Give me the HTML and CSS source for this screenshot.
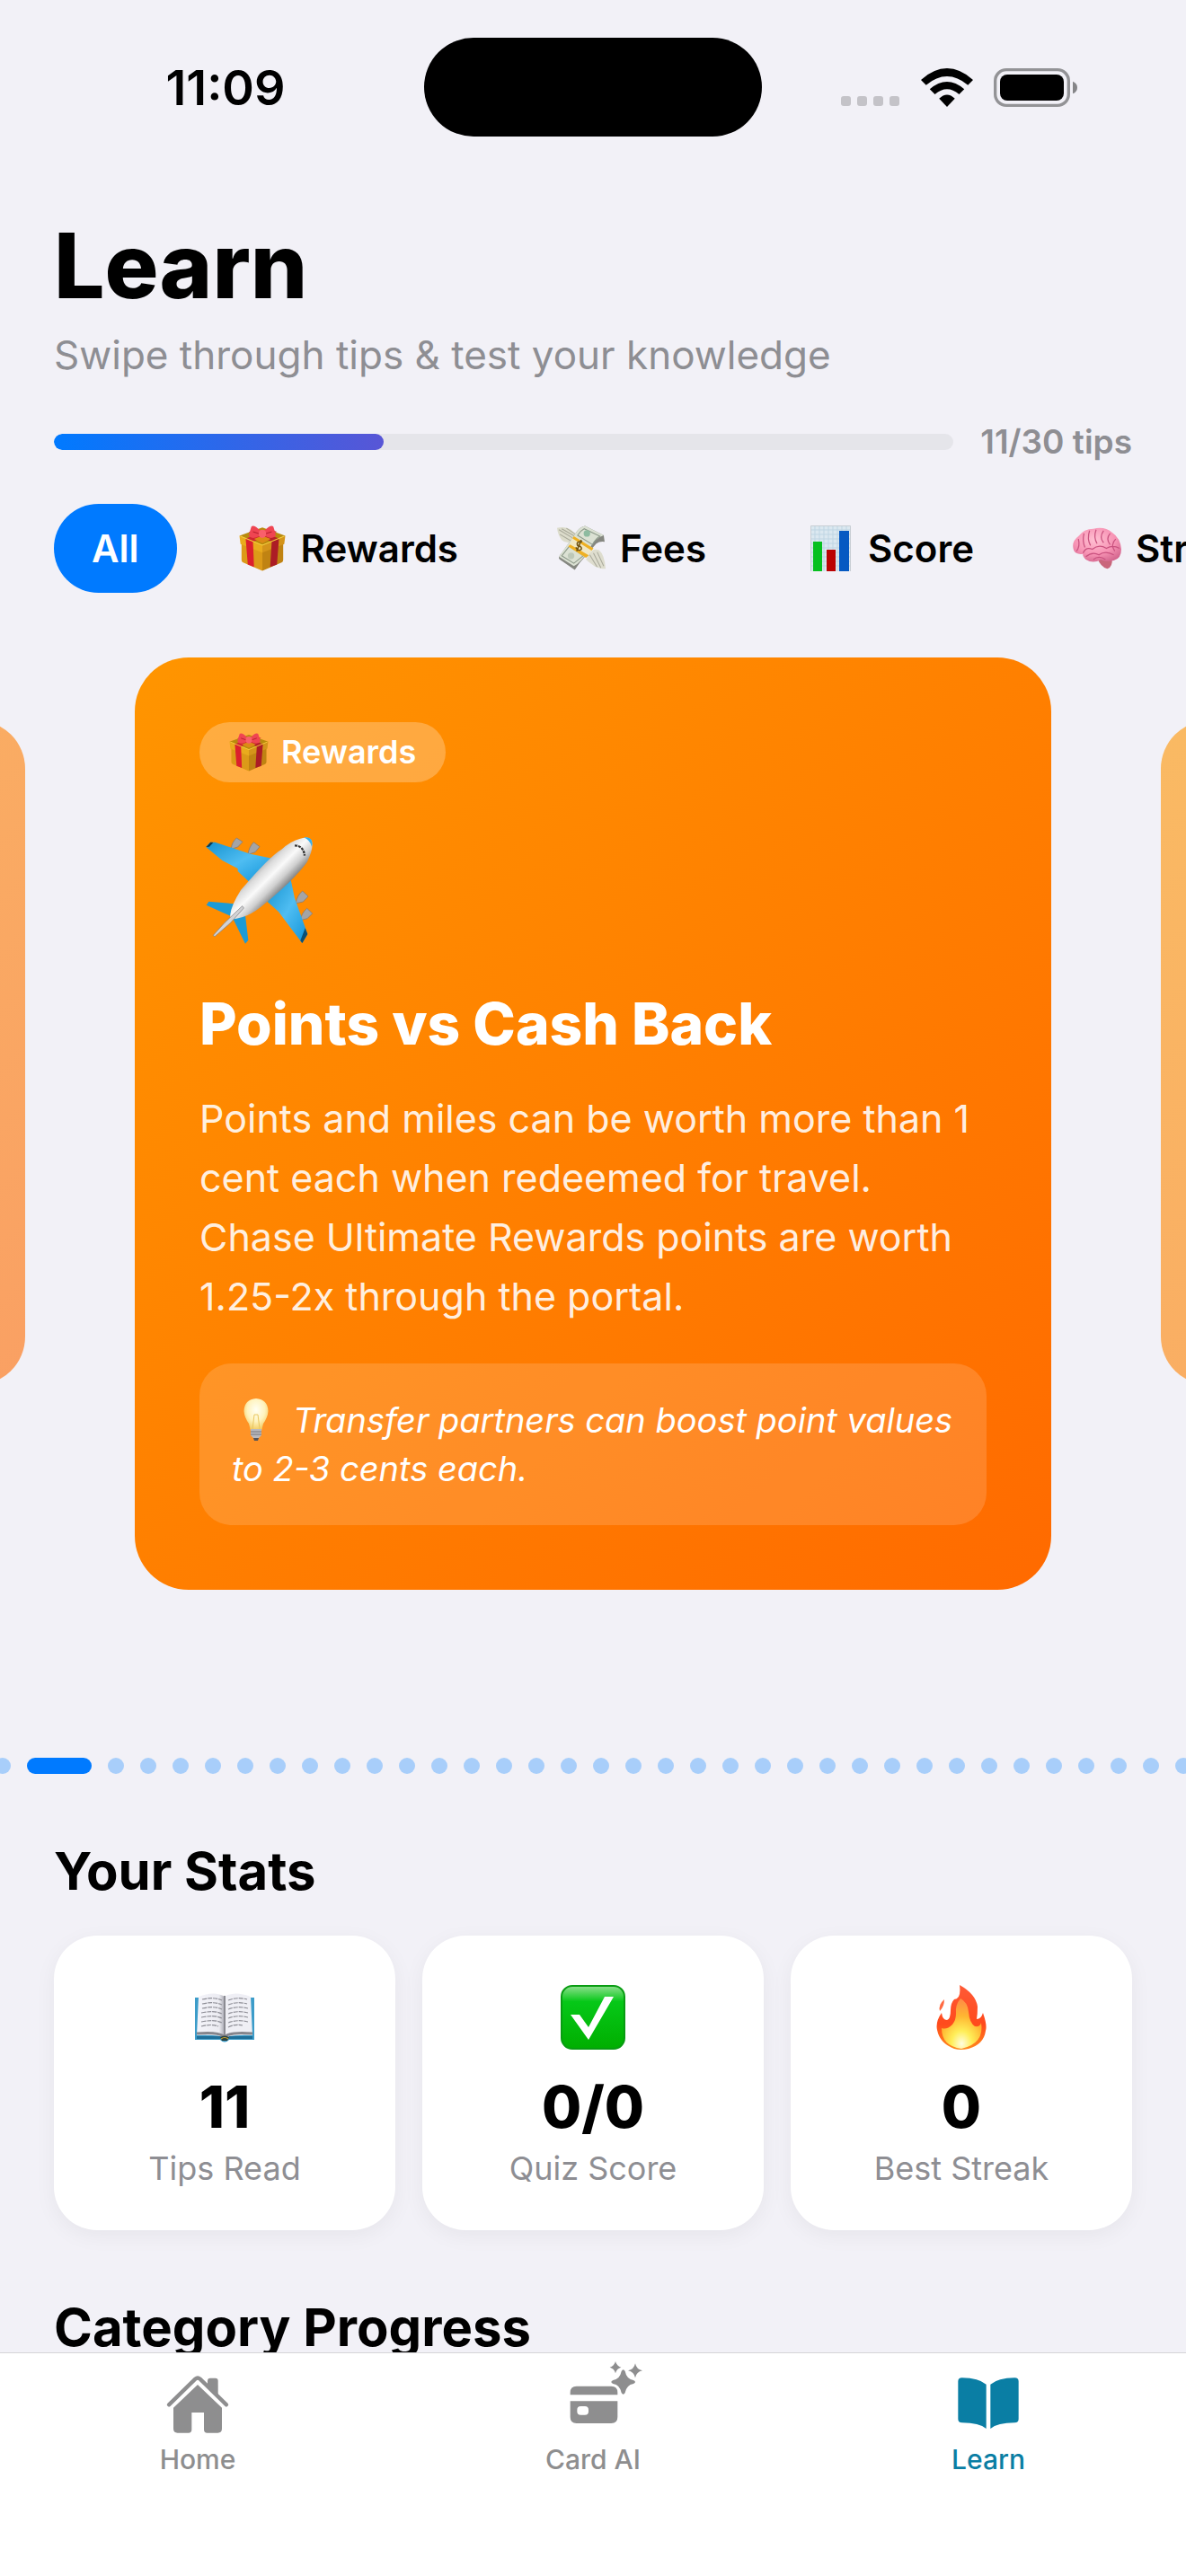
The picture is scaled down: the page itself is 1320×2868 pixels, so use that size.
FILE: index.html
```html
<!DOCTYPE html>
<html lang="en">
<head>
<meta charset="utf-8">
<meta name="viewport" content="width=device-width, initial-scale=1">
<title>Learn</title>
<link rel="stylesheet" href="styles.css">
</head>
<body>

<!-- Shared drawings -->
<svg class="defs" aria-hidden="true">
  <defs>
    <linearGradient id="wing" x1="0" y1="0" x2="1" y2="1">
      <stop offset="0" stop-color="#1592cf"/>
      <stop offset="0.5" stop-color="#4fbdf2"/>
      <stop offset="1" stop-color="#0f93d8"/>
    </linearGradient>
    <linearGradient id="fuselage" gradientUnits="userSpaceOnUse" x1="260" y1="545" x2="345" y2="630">
      <stop offset="0" stop-color="#9c9c9c"/>
      <stop offset="0.25" stop-color="#dcdcdc"/>
      <stop offset="0.5" stop-color="#fafafa"/>
      <stop offset="0.75" stop-color="#d0d0d0"/>
      <stop offset="1" stop-color="#808080"/>
    </linearGradient>
    <radialGradient id="bulb" cx="0.5" cy="0.35" r="0.6">
      <stop offset="0" stop-color="#fffff4"/>
      <stop offset="0.6" stop-color="#fff3bd"/>
      <stop offset="1" stop-color="#f4cf6a"/>
    </radialGradient>
    <linearGradient id="check" x1="0" y1="0" x2="0" y2="1">
      <stop offset="0" stop-color="#8fe08f"/>
      <stop offset="0.25" stop-color="#06c818"/>
      <stop offset="1" stop-color="#00ae00"/>
    </linearGradient>
    <linearGradient id="flame" x1="0" y1="0" x2="0" y2="1">
      <stop offset="0" stop-color="#ff5a36"/>
      <stop offset="0.6" stop-color="#ff4a1c"/>
      <stop offset="1" stop-color="#ff8a1c"/>
    </linearGradient>
    <radialGradient id="flameCore" cx="0.5" cy="0.9" r="0.85">
      <stop offset="0" stop-color="#fffde0"/>
      <stop offset="0.3" stop-color="#ffee58"/>
      <stop offset="0.65" stop-color="#ffb631"/>
      <stop offset="1" stop-color="#ff8f43"/>
    </radialGradient>
    <linearGradient id="page" x1="0" y1="0" x2="1" y2="0">
      <stop offset="0" stop-color="#f4f4fa"/>
      <stop offset="0.8" stop-color="#ececf2"/>
      <stop offset="1" stop-color="#a9a9b2"/>
    </linearGradient>
    <radialGradient id="brain" cx="0.45" cy="0.35" r="0.7">
      <stop offset="0" stop-color="#ffc0d2"/>
      <stop offset="0.6" stop-color="#f793b4"/>
      <stop offset="1" stop-color="#d4678f"/>
    </radialGradient>

    <symbol id="gift" viewBox="0 0 44 44">
      <path d="M2 15 L22 23 V43.500 L3.500 35.500 Q2 35 2 33Z" fill="#dc9a18"/>
      <path d="M42 15 L22 23 V43.500 L40.500 35.500 Q42 35 42 33Z" fill="#c08312"/>
      <path d="M0 10 L22 2 L44 10 L22 19Z" fill="#b98a0c"/>
      <path d="M0 10 L22 19 V26 L1 18Z" fill="#e9ab1d"/>
      <path d="M44 10 L22 19 V26 L43 18Z" fill="#d4941a"/>
      <path d="M6 12.500 L13 15.500 L14 40 L8 37.500Z" fill="#dc1f2d"/>
      <path d="M38 12.500 L31 15.500 L29.500 40 L36 37.500Z" fill="#ac1c25"/>
      <path d="M6 12.500 L30 4 L36 6 L13 15.500Z" fill="#cf2430"/>
      <path d="M38 12.500 L14 4 L9 6.500 L31 15.500Z" fill="#b81f29"/>
      <path d="M14 13 L22 10 L30 13 L22 17Z" fill="#dd8a16"/>
      <path d="M1 10.300 L22 19 L43 10.300" stroke="#f4cb3c" stroke-width="0.900" fill="none"/>
      <path d="M20 5 Q14 -1 11.500 1 Q10 5 9 10 Q12 14 20 10Z" fill="#ef4552"/>
      <path d="M24 5 Q30 -1 32.500 1 Q34 5 35 10 Q31 14 24 10Z" fill="#ef4552"/>
      <path d="M13 6 L19 8 M31 6 L25 8" stroke="#b82230" stroke-width="1"/>
      <rect x="18.500" y="4" width="7" height="8" rx="3.500" fill="#f9606a"/>
    </symbol>

    <symbol id="cash" viewBox="0 0 52 48">
      <path d="M19 16 Q10 20 5 15 Q1 10 0 2 Q9 0 15 4 Q20 8 22 13Z" fill="#dcdccb"/>
      <path d="M2 4 L17 13 M5 3 L19 11 M3 9 L15 16 M10 2.500 L20 9" stroke="#a9a99a" stroke-width="1"/>
      <path d="M34 30 Q39 23 45 26 Q51 31 52 46 Q45 46 40 43 Q34 39 31 36Z" fill="#deddce"/>
      <path d="M35 31 L43 44 M39 29 L47 45 M43 28 L50 43" stroke="#aaaa9c" stroke-width="1"/>
      <path d="M30 0 Q24 1 19 9 L5 29 Q0 34 3 36 L19 47 L24 40 L42 19 Q46 16 51 17 L50 10Z" fill="#858780"/>
      <path d="M30 0 Q24 1 19 9 L2 33 L18 43 Q25 40 34 26 Q40 13 50 10Z" fill="#dbe1d3"/>
      <path d="M29 3 Q25 5 22 10 L38 20 Q41 14 46 11Z M13 22 L5 32 L18 40 L28 32Z" fill="none" stroke="#8c9989" stroke-width="1"/>
      <circle cx="32" cy="8" r="3.500" fill="#8dbba0"/>
      <circle cx="15" cy="32" r="3.500" fill="#bdc8b8"/>
      <path d="M18 11 L39 24 L31 34 L12 22Z" fill="#f0e7c4"/>
      <path d="M18 11 L39 24 L37 26.500 L16.500 13.500Z M14 20 L34 31.500 L31 34 L12 22Z" fill="#eeb023"/>
      <path d="M27 17 Q20 16 22 21 Q27 22 26 25 Q23 28 20 23 M26 15 L21 27" fill="none" stroke="#705311" stroke-width="1.500"/>
    </symbol>

    <symbol id="chart" viewBox="-6 0 54 51">
      <rect width="45" height="51" fill="#dbe8f0"/>
      <path d="M0 5H45M0 10H45M0 15H45M0 20H45M0 25H45M0 30H45M0 35H45M0 40H45M0 45H45M5 0V51M10 0V51M15 0V51M20 0V51M25 0V51M30 0V51M35 0V51M40 0V51" stroke="#bfd5e3" stroke-width="1"/>
      <path d="M0.500 51 V0.500 H44.500 V51" fill="none" stroke="#c8ced4"/>
      <rect x="3" y="18" width="10" height="33" fill="#06c01f"/>
      <rect x="18" y="27" width="10" height="24" fill="#bb0203"/>
      <rect x="32" y="6" width="11" height="45" fill="#0559c2"/>
    </symbol>

    <symbol id="brainIcon" viewBox="0 0 52 44">
      <path d="M26 32 Q30 42 37 44 Q43 42 42 32Z" fill="#c9667b"/>
      <path d="M1 24 Q-2 15 6 9 Q12 1 22 1 Q34 -2 42 5 Q51 11 52 23 Q52 33 44 35 Q37 37 30 34 Q22 39 14 34 Q10 30 11 28 Q3 29 1 24Z" fill="url(#brain)"/>
      <path d="M6 12 Q8 20 4 25 M12 6 Q10 14 13 21 M18 3 Q15 12 19 19 M25 2 Q22 10 26 17 M33 3 Q28 10 33 16 M40 6 Q35 12 40 18 M46 12 Q40 18 45 25 M11 27 Q14 20 21 23 Q28 17 36 22 Q43 18 50 22 M14 31 Q21 25 28 29 Q35 24 44 29 M22 34 Q28 29 35 34" fill="none" stroke="#c9527f" stroke-width="1.200"/>
    </symbol>

    <symbol id="plane" viewBox="66 435 396 396">
      <g fill="#a4a4a6" stroke="#77777a" stroke-width="2">
        <path d="M190 459 L210 472 L194 489 L172 496 Q173 474 190 459Z"/>
        <path d="M247 473 L267 488 L252 506 L228 514 Q231 489 247 473Z"/>
        <path d="M410 636 L429 654 L412 672 L388 677 Q391 652 410 636Z"/>
        <path d="M425 694 L443 711 L426 728 L403 734 Q406 710 425 694Z"/>
      </g>
      <path d="M88 489 L103 473 L118 473 L236 512 L312 528 L300 570 L230 604 L194 570 L194 561 L142 534Z" fill="url(#wing)"/>
      <path d="M88 489 L103 473 L112 474 L99 488Z" fill="#0b3a52"/>
      <path d="M370 594 L384 660 L427 780 L409 810 L368 756 L330 705 L293 672 Z" fill="url(#wing)"/>
      <path d="M427 780 L409 810 L403 802 L419 760Z" fill="#0b4f74"/>
      <path d="M89 683 L97 671 L184 679 L178 722 L166 718Z M178 728 L219 718 L229 800 L219 812Z" fill="#1c9bd6"/>
      <path d="M400 462 Q430 450 441 468 Q448 495 425 540 Q380 602 270 690 Q225 727 170 731 Q162 700 204 633 Q300 520 340 497 Q370 470 400 462Z" fill="url(#fuselage)"/>
      <path d="M415 457 Q433 454 440 466 Q445 476 441 488 Q436 467 415 457Z" fill="#35b0ee"/>
      <path d="M384 484 Q414 485 417 518" fill="none" stroke="#333" stroke-width="7" stroke-dasharray="9 3"/>
      <path d="M209 686 L214 693 L170 742 L117 788 L112 784 L150 742Z" fill="#d2d2d4" stroke="#77777a" stroke-width="2"/>
    </symbol>

    <symbol id="bulbIcon" viewBox="0 0 30 48">
      <path d="M15 0 Q28 1 28.500 14 Q28 21 23 28 L21 36 H9 L7 28 Q2 21 1.500 14 Q2 1 15 0Z" fill="url(#bulb)"/>
      <path d="M11 34 L13 18 L17 18 L19 34" fill="none" stroke="#e9c862" stroke-width="1"/>
      <path d="M9 34 H21 V41 L18 44 H12 L9 41Z" fill="#b9b9bd"/>
      <path d="M9 37 H21 M9 40 H21" stroke="#77777c" stroke-width="1"/>
      <path d="M12 44 H18 L17 47 H13Z" fill="#55555a"/>
    </symbol>

    <symbol id="bookEmoji" viewBox="0 0 72 72">
      <path d="M3 14 H69 V61 H41 Q36 66 31 61 H3Z" fill="#3c9cc9"/>
      <path d="M5 57 H32 Q36 60 40 57 H67 V60 H40 Q36 64 32 60 H5Z" fill="#1f6f99"/>
      <path d="M7 13 Q25 6 36 13 V59 Q30 55 5 56Z" fill="url(#page)"/>
      <path d="M65 13 Q47 6 36 13 V59 Q42 55 67 56Z" fill="#efeff5"/>
      <path d="M5 54 Q28 52 35 57 M67 54 Q44 52 37 57" fill="none" stroke="#85858c" stroke-width="3"/>
      <path d="M36 12 V58" stroke="#8b8b92" stroke-width="2"/>
      <path d="M11 16 Q25 13 33 17 M11 21 Q25 18 33 22 M11 26 Q25 23 33 27 M10 31 Q25 28 33 32 M10 36 Q25 33 33 37 M10 41 Q25 38 33 42 M10 46 Q22 43 29 46 M40 17 Q50 13 61 16 M40 22 Q50 18 61 21 M40 27 Q50 23 62 26 M40 32 Q50 28 62 31 M40 37 Q50 33 62 36 M40 42 Q50 38 62 41 M40 47 Q48 43 56 45" fill="none" stroke="#8e8e96" stroke-width="1.200" stroke-dasharray="5 1"/>
      <path d="M31 58 Q36 55 41 58 L39 62 H33Z" fill="#2a4140"/>
      <path d="M32 60 Q36 57 40 60" fill="none" stroke="#c9a42c" stroke-width="1.200"/>
    </symbol>

    <symbol id="checkIcon" viewBox="0 0 72 72">
      <rect x="1" y="1" width="70" height="70" rx="12" fill="url(#check)" stroke="#089c12" stroke-width="2"/>
      <path d="M11 33 H21 L31 47 L49 13 H59 L31 61Z" fill="#fff"/>
    </symbol>

    <symbol id="fireIcon" viewBox="0 0 56 72">
      <path d="M26 0 Q44 10 46 24 Q46 32 45 38 Q50 38 52 31 Q57 45 55 51 Q53 66 36 71 Q27 73 20 71 Q4 65 1 50 Q-1 41 6 31 Q7 39 12 39 Q16 38 16 28 Q16 20 20 16 Q28 16 26 0Z" fill="url(#flame)"/>
      <path d="M9 16 Q9 24 4 29 Q2 22 9 16Z" fill="#ff6a42"/>
      <path d="M27 15 Q35 19 36 30 Q37 42 43 46 Q49 47 50 42 Q54 65 28 71 Q6 68 6 48 Q12 50 18 44 Q22 39 22 32 Q21 22 27 15Z" fill="url(#flameCore)"/>
    </symbol>
  </defs>
</svg>

<div class="app">

  <div class="status-bar">
    <span class="time">11:09</span>
    <span class="island"></span>
    <div class="status-icons">
      <svg width="66" height="43" viewBox="0 0 66 43" fill="#c4c3c8">
        <rect x="0" y="31" width="11" height="11" rx="3"/>
        <rect x="18" y="31" width="11" height="11" rx="3"/>
        <rect x="36" y="31" width="11" height="11" rx="3"/>
        <rect x="54" y="31" width="11" height="11" rx="3"/>
      </svg>
      <svg width="58" height="43" viewBox="0 0 172 127">
        <path d="M0 38 Q86 -38 172 38 L155 55 Q86 -2 17 55Z"/>
        <path d="M29 69 Q86 20 143 69 L126 86 Q86 52 46 86Z"/>
        <path d="M60 100 Q86 74 112 100 L86 127Z"/>
      </svg>
      <svg width="93" height="43" viewBox="0 0 279 129">
        <rect x="5" y="5" width="245" height="119" rx="37" fill="none" stroke="#939396" stroke-width="10"/>
        <rect x="21" y="21" width="213" height="87" rx="24"/>
        <path d="M264 44 Q279 50 279 64.500 Q279 79 264 85Z" fill="#858588"/>
      </svg>
    </div>
  </div>

  <main class="content">
    <header class="header">
      <h1>Learn</h1>
      <p class="subtitle">Swipe through tips &amp; test your knowledge</p>
      <div class="progress-row">
        <div class="progress" role="progressbar" aria-label="Tips read" aria-valuemin="0" aria-valuemax="30" aria-valuenow="11">
          <div class="progress-fill" style="width: 36.67%"></div>
        </div>
        <span class="progress-label">11/30 tips</span>
      </div>
    </header>

    <div class="chips">
      <button class="chip active">All</button>
      <button class="chip"><svg class="chip-icon"><use href="#gift"/></svg>Rewards</button>
      <button class="chip"><svg class="chip-icon"><use href="#cash"/></svg>Fees</button>
      <button class="chip"><svg class="chip-icon"><use href="#chart"/></svg>Score</button>
      <button class="chip"><svg class="chip-icon"><use href="#brainIcon"/></svg>Strategy</button>
    </div>

    <section class="carousel">
      <div class="side-card" aria-hidden="true"></div>
      <article class="tip-card">
        <span class="badge"><svg class="badge-icon"><use href="#gift"/></svg>Rewards</span>
        <svg class="tip-icon"><use href="#plane"/></svg>
        <h2>Points vs Cash Back</h2>
        <p class="tip-text">Points and miles can be worth more than 1 cent each when redeemed for travel. Chase Ultimate Rewards points are worth 1.25-2x through the portal.</p>
        <p class="tip-note"><svg class="note-icon"><use href="#bulbIcon"/></svg>Transfer partners can boost point values to 2-3 cents each.</p>
      </article>
      <div class="side-card" aria-hidden="true"></div>
    </section>

    <div class="dots">
      <i></i><i class="active"></i><i></i><i></i><i></i><i></i><i></i><i></i><i></i>
      <i></i><i></i><i></i><i></i><i></i><i></i><i></i><i></i><i></i>
      <i></i><i></i><i></i><i></i><i></i><i></i><i></i><i></i><i></i>
      <i></i><i></i><i></i><i></i><i></i><i></i><i></i><i></i><i></i>
    </div>

    <section class="section">
      <h2 class="section-title">Your Stats</h2>
      <div class="stats">
        <div class="stat">
          <svg class="stat-icon"><use href="#bookEmoji"/></svg>
          <strong>11</strong>
          <span>Tips Read</span>
        </div>
        <div class="stat">
          <svg class="stat-icon"><use href="#checkIcon"/></svg>
          <strong>0/0</strong>
          <span>Quiz Score</span>
        </div>
        <div class="stat">
          <svg class="stat-icon"><use href="#fireIcon"/></svg>
          <strong>0</strong>
          <span>Best Streak</span>
        </div>
      </div>
    </section>

    <section class="section">
      <h2 class="section-title">Category Progress</h2>
    </section>
  </main>

  <nav class="tab-bar">
    <a class="tab" href="#home">
      <svg viewBox="0 0 360 300" fill="currentColor">
        <path d="M84 172 L172 86 Q180 79 188 86 L276 172" fill="none" stroke="currentColor" stroke-width="13" stroke-linecap="round"/>
        <path d="M213 106 V92 Q213 83 222 83 H239 Q248 83 248 92 V142Z"/>
        <path d="M180 105 L261 182 V252 Q261 266 247 266 H212 Q201 266 201 255 V198 H160 V255 Q160 266 149 266 H113 Q99 266 99 252 V182Z"/>
      </svg>
      <span>Home</span>
    </a>
    <a class="tab" href="#card-ai">
      <svg viewBox="0 0 360 300" fill="currentColor">
        <path d="M104 139 V131 Q104 110 125 110 H241 Q262 110 262 131 V139Z"/>
        <path fill-rule="evenodd" d="M104 160 H262 V213 Q262 234 241 234 H125 Q104 234 104 213Z M139 177 Q127 177 127 189 V195 Q127 206 139 206 H153 Q165 206 165 195 V189 Q165 177 153 177Z"/>
        <path d="M275 60 Q281 50 287 60 Q292 86 315 90 Q327 96 315 102 Q292 106 287 132 Q281 142 275 132 Q270 106 247 102 Q235 96 247 90 Q270 86 275 60Z"/>
        <path d="M255 27 Q259 43 274 47 Q259 51 255 67 Q251 51 236 47 Q251 43 255 27Z"/>
        <path d="M321 34 Q325 54 345 58 Q325 62 321 82 Q317 62 297 58 Q317 54 321 34Z"/>
      </svg>
      <span>Card AI</span>
    </a>
    <a class="tab current" href="#learn">
      <svg viewBox="0 0 360 300" fill="currentColor">
        <path d="M79 94 Q79 82 92 82 Q148 83 173 104 V252 Q150 232 92 232 Q79 232 79 220Z"/>
        <path d="M281 94 Q281 82 268 82 Q212 83 187 104 V252 Q210 232 268 232 Q281 232 281 220Z"/>
      </svg>
      <span>Learn</span>
    </a>
  </nav>

</div>

</body>
</html>
```
FILE: styles.css
```css
* {
  box-sizing: border-box;
}

body {
  margin: 0;
  font-family: Inter, "Liberation Sans", sans-serif;
  color: #000;
  background-color: #f2f1f7;
}

h1, h2, p {
  margin: 0;
}

.defs {
  position: absolute;
  width: 0;
  height: 0;
}

/* Full height column: status bar, content, tab bar */
.app {
  display: flex;
  flex-direction: column;
  height: 100vh;
  overflow: hidden;
}

/* Status bar */
.status-bar {
  display: grid;
  grid-template-columns: 1fr 376px 1fr;
  align-items: center;
  justify-items: center;
  height: 194px;
  flex-shrink: 0;
}

.time {
  padding-left: 30px;
  font-size: 54px;
  font-weight: 600;
}

.island {
  width: 376px;
  height: 110px;
  border-radius: 55px;
  background-color: #000;
}

.status-icons {
  display: flex;
  gap: 23px;
  padding-right: 33px;
}

.content {
  flex: 1;
  min-height: 0;
  overflow: hidden;
}

/* Header */
.header {
  padding: 42px 60px 0;
}

h1 {
  font-size: 100px;
  line-height: 120px;
  font-weight: 800;
}

.subtitle {
  margin-top: 12px;
  font-size: 44px;
  line-height: 54px;
  color: #8e8e93;
}

.progress-row {
  display: flex;
  align-items: center;
  gap: 30px;
  margin-top: 48px;
}

.progress {
  flex: 1;
  height: 18px;
  border-radius: 9px;
  background-color: #e5e5ea;
  overflow: hidden;
}

.progress-fill {
  height: 100%;
  border-radius: 9px;
  background: linear-gradient(90deg, #007aff, #5856d6);
}

.progress-label {
  font-size: 37px;
  line-height: 44px;
  font-weight: 600;
  color: #8e8e93;
}

/* Category chips */
.chips {
  display: flex;
  gap: 24px;
  padding: 47px 60px 0;
  overflow: hidden;
}

.chip {
  display: flex;
  align-items: center;
  flex-shrink: 0;
  gap: 16px;
  height: 99px;
  padding: 0 42px;
  border: none;
  border-radius: 50px;
  background: none;
  font-family: inherit;
  font-size: 42px;
  font-weight: 600;
  color: #000;
  cursor: pointer;
}

.chip.active {
  background-color: #007aff;
  color: #fff;
}

.chip-icon {
  width: 54px;
  height: 51px;
  margin-left: 2px;
}

/* Carousel */
.carousel {
  display: flex;
  justify-content: center;
  align-items: flex-start;
  gap: 122px;
  padding-top: 72px;
  overflow: hidden;
}

.tip-card {
  display: flex;
  flex-direction: column;
  align-items: flex-start;
  flex-shrink: 0;
  width: 1020px;
  padding: 72px;
  border-radius: 60px;
  background: linear-gradient(135deg, #ff9500, #ff6a00);
  color: #fff;
}

.side-card {
  flex-shrink: 0;
  width: 918px;
  height: 740px;
  margin-top: 70px;
  border-radius: 54px;
  background: linear-gradient(135deg, #ff9500, #ff6a00);
  opacity: 0.6;
}

.badge {
  display: flex;
  align-items: center;
  gap: 14px;
  padding: 12px 33px;
  border-radius: 34px;
  background-color: rgba(255, 255, 255, 0.25);
  font-size: 36px;
  line-height: 43px;
  font-weight: 600;
}

.badge-icon {
  width: 44px;
  height: 43px;
}

.tip-icon {
  width: 132px;
  height: 132px;
  margin-top: 54px;
}

.tip-card h2 {
  margin-top: 43px;
  font-size: 64px;
  line-height: 80px;
  font-weight: 800;
}

.tip-text {
  margin-top: 32px;
  font-size: 43px;
  line-height: 66px;
  color: rgba(255, 255, 255, 0.9);
}

.tip-note {
  width: 100%;
  margin-top: 42px;
  padding: 36px;
  border-radius: 36px;
  background-color: rgba(255, 255, 255, 0.15);
  font-size: 38px;
  line-height: 54px;
  font-style: italic;
}

.note-icon {
  width: 30px;
  height: 48px;
  margin: 0 26px 0 12px;
  vertical-align: -10px;
}

/* Page dots */
.dots {
  display: flex;
  gap: 18px;
  margin: 187px 0 0 -6px;
}

.dots i {
  flex-shrink: 0;
  width: 18px;
  height: 18px;
  border-radius: 9px;
  background-color: #a8cefa;
}

.dots .active {
  width: 72px;
  background-color: #007aff;
}

/* Stats */
.section {
  padding: 72px 60px 0;
}

.section-title {
  font-size: 58px;
  line-height: 72px;
  font-weight: 700;
}

.stats {
  display: flex;
  gap: 30px;
  margin-top: 36px;
}

.stat {
  display: flex;
  flex: 1;
  flex-direction: column;
  align-items: center;
  padding: 55px 24px 47px;
  border-radius: 48px;
  background-color: #fff;
  box-shadow: 0 6px 24px rgba(0, 0, 0, 0.05);
}

.stat-icon {
  width: 72px;
  height: 72px;
}

.stat strong {
  margin-top: 24px;
  font-size: 64px;
  line-height: 80px;
  font-weight: 800;
}

.stat span {
  margin-top: 6px;
  font-size: 36px;
  line-height: 44px;
  color: #8e8e93;
}

/* Tab bar */
.tab-bar {
  display: flex;
  flex-shrink: 0;
  padding-bottom: 112px;
  border-top: 1px solid #d5d5d8;
  background-color: #fff;
}

.tab {
  display: flex;
  flex: 1;
  flex-direction: column;
  align-items: center;
  font-size: 30px;
  line-height: 36px;
  font-weight: 500;
  color: #8e8e8f;
  text-decoration: none;
}

.tab svg {
  width: 120px;
  height: 100px;
}

.tab.current {
  color: #0a7ea4;
}
```
